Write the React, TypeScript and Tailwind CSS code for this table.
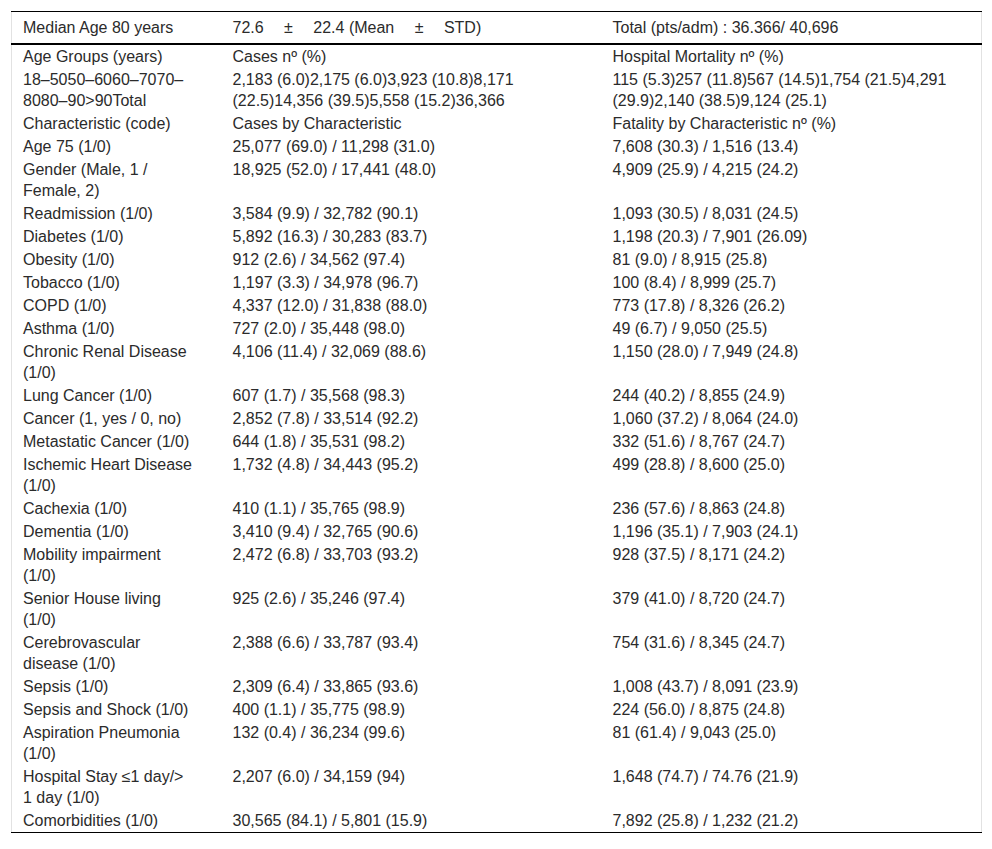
const rows: [string, string, string][] = [
  ['Age Groups (years)', 'Cases nº (%)', 'Hospital Mortality nº (%)'],
  [
    '18–5050–6060–7070–8080–90>90Total',
    '2,183 (6.0)2,175 (6.0)3,923 (10.8)8,171 (22.5)14,356 (39.5)5,558 (15.2)36,366',
    '115 (5.3)257 (11.8)567 (14.5)1,754 (21.5)4,291 (29.9)2,140 (38.5)9,124 (25.1)',
  ],
  ['Characteristic (code)', 'Cases by Characteristic', 'Fatality by Characteristic nº (%)'],
  ['Age 75 (1/0)', '25,077 (69.0) / 11,298 (31.0)', '7,608 (30.3) / 1,516 (13.4)'],
  ['Gender (Male, 1 / Female, 2)', '18,925 (52.0) / 17,441 (48.0)', '4,909 (25.9) / 4,215 (24.2)'],
  ['Readmission (1/0)', '3,584 (9.9) / 32,782 (90.1)', '1,093 (30.5) / 8,031 (24.5)'],
  ['Diabetes (1/0)', '5,892 (16.3) / 30,283 (83.7)', '1,198 (20.3) / 7,901 (26.09)'],
  ['Obesity (1/0)', '912 (2.6) / 34,562 (97.4)', '81 (9.0) / 8,915 (25.8)'],
  ['Tobacco (1/0)', '1,197 (3.3) / 34,978 (96.7)', '100 (8.4) / 8,999 (25.7)'],
  ['COPD (1/0)', '4,337 (12.0) / 31,838 (88.0)', '773 (17.8) / 8,326 (26.2)'],
  ['Asthma (1/0)', '727 (2.0) / 35,448 (98.0)', '49 (6.7) / 9,050 (25.5)'],
  ['Chronic Renal Disease (1/0)', '4,106 (11.4) / 32,069 (88.6)', '1,150 (28.0) / 7,949 (24.8)'],
  ['Lung Cancer (1/0)', '607 (1.7) / 35,568 (98.3)', '244 (40.2) / 8,855 (24.9)'],
  ['Cancer (1, yes / 0, no)', '2,852 (7.8) / 33,514 (92.2)', '1,060 (37.2) / 8,064 (24.0)'],
  ['Metastatic Cancer (1/0)', '644 (1.8) / 35,531 (98.2)', '332 (51.6) / 8,767 (24.7)'],
  ['Ischemic Heart Disease (1/0)', '1,732 (4.8) / 34,443 (95.2)', '499 (28.8) / 8,600 (25.0)'],
  ['Cachexia (1/0)', '410 (1.1) / 35,765 (98.9)', '236 (57.6) / 8,863 (24.8)'],
  ['Dementia (1/0)', '3,410 (9.4) / 32,765 (90.6)', '1,196 (35.1) / 7,903 (24.1)'],
  ['Mobility impairment (1/0)', '2,472 (6.8) / 33,703 (93.2)', '928 (37.5) / 8,171 (24.2)'],
  ['Senior House living (1/0)', '925 (2.6) / 35,246 (97.4)', '379 (41.0) / 8,720 (24.7)'],
  ['Cerebrovascular disease (1/0)', '2,388 (6.6) / 33,787 (93.4)', '754 (31.6) / 8,345 (24.7)'],
  ['Sepsis (1/0)', '2,309 (6.4) / 33,865 (93.6)', '1,008 (43.7) / 8,091 (23.9)'],
  ['Sepsis and Shock (1/0)', '400 (1.1) / 35,775 (98.9)', '224 (56.0) / 8,875 (24.8)'],
  ['Aspiration Pneumonia (1/0)', '132 (0.4) / 36,234 (99.6)', '81 (61.4) / 9,043 (25.0)'],
  ['Hospital Stay ≤1 day/> 1 day (1/0)', '2,207 (6.0) / 34,159 (94)', '1,648 (74.7) / 74.76 (21.9)'],
  ['Comorbidities (1/0)', '30,565 (84.1) / 5,801 (15.9)', '7,892 (25.8) / 1,232 (21.2)'],
];

export default function App() {
  return (
    <div className="min-h-screen bg-white pt-[11px] px-[11px] font-['Liberation_Sans',Arial,sans-serif]">
      <table className="w-[970px] table-fixed border-collapse border-x border-b border-x-[#e2e2e2] border-b-black text-[16px] leading-[21px] text-[#2b2b2b]">
        <colgroup>
          <col className="w-[210px]" />
          <col className="w-[380px]" />
          <col className="w-[380px]" />
        </colgroup>
        <thead>
          <tr className="border-t border-t-black border-b-2 border-b-black">
            <th className="pl-[11px] pr-[29px] py-[5px] text-left font-normal">Median Age 80 years</th>
            <th className="pl-[11px] pr-[11px] py-[5px] text-left font-normal whitespace-pre">
              {'72.6 \u2003±\u2003 22.4 (Mean \u2003±\u2003 STD)'}
            </th>
            <th className="pl-[11px] pr-[11px] py-[5px] text-left font-normal">Total (pts/adm) : 36.366/ 40,696</th>
          </tr>
        </thead>
        <tbody>
          {rows.map(([label, cases, deaths]) => (
            <tr key={label}>
              <td className="pl-[11px] pr-[29px] py-px align-top">{label}</td>
              <td className="pl-[11px] pr-[11px] py-px align-top">{cases}</td>
              <td className="pl-[11px] pr-[11px] py-px align-top">{deaths}</td>
            </tr>
          ))}
        </tbody>
      </table>
    </div>
  );
}
